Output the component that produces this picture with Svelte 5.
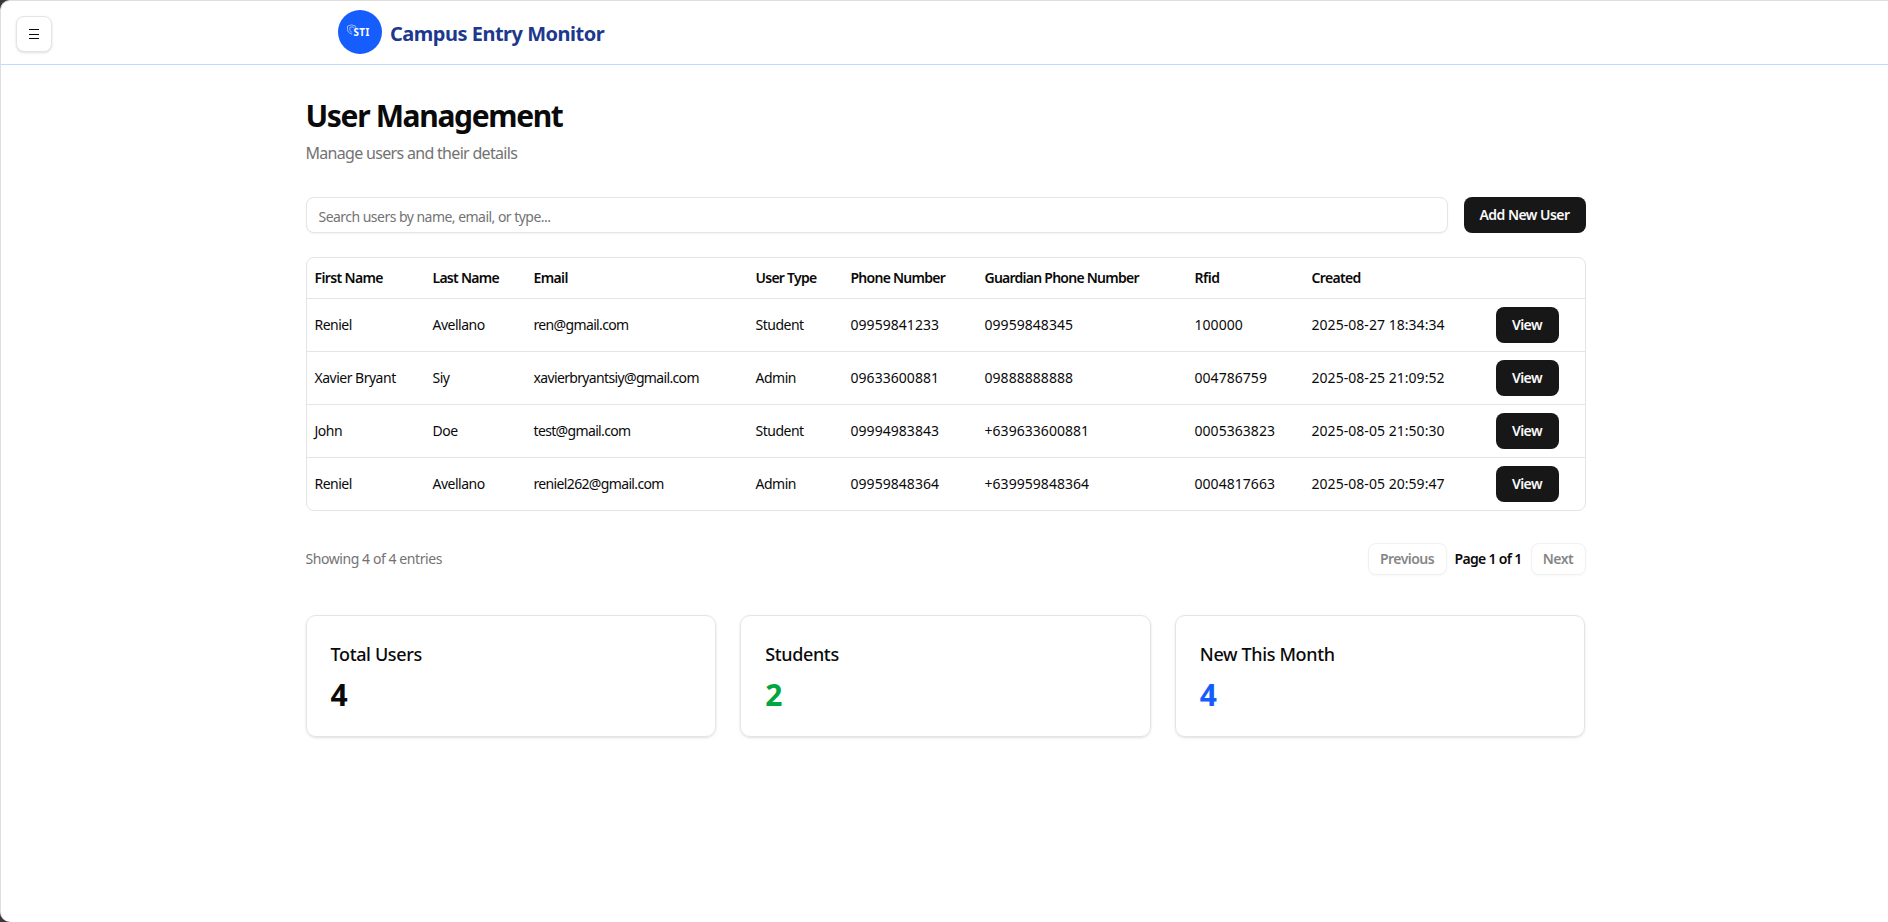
<script>
  const columns = [
    ['First Name', 118, -0.63],
    ['Last Name', 101, -0.73],
    ['Email', 222, -0.62],
    ['User Type', 95, -0.73],
    ['Phone Number', 134, -0.74],
    ['Guardian Phone Number', 210, -0.75],
    ['Rfid', 117, -0.5],
    ['Created', 184, -0.65],
    ['', 97, 0]
  ];
  const users = [
    ['Reniel', 'Avellano', 'ren@gmail.com', 'Student', '09959841233', '09959848345', '100000', '2025-08-27 18:34:34'],
    ['Xavier Bryant', 'Siy', 'xavierbryantsiy@gmail.com', 'Admin', '09633600881', '09888888888', '004786759', '2025-08-25 21:09:52'],
    ['John', 'Doe', 'test@gmail.com', 'Student', '09994983843', '+639633600881', '0005363823', '2025-08-05 21:50:30'],
    ['Reniel', 'Avellano', 'reniel262@gmail.com', 'Admin', '09959848364', '+639959848364', '0004817663', '2025-08-05 20:59:47']
  ];
  const stats = [
    { label: 'Total Users', value: 4, tone: 'plain' },
    { label: 'Students', value: 2, tone: 'green' },
    { label: 'New This Month', value: 4, tone: 'blue' }
  ];
</script>

<div class="backdrop">
  <div class="page">
    <header>
      <button class="menu" aria-label="Menu">
        <svg width="12" height="12" viewBox="0 0 12 12" shape-rendering="crispEdges"><path d="M1 1.5h10M1 6.5h10M1 10.5h10" stroke="#0a0a0a" /></svg>
      </button>
      <div class="brand">
        <svg class="logo" width="44" height="44" viewBox="0 0 44 44">
          <circle cx="22" cy="22" r="22" fill="#155dfc" />
          <path d="M9.5 16.2l4-1.4 4.2 1.4v1.6M9.5 16.2v3.2c0 2.2 1.5 3.8 4.6 4.8M11.8 17.6l2.2-.8 2.2.8M11.8 17.6v2.2c0 1.1.9 2 2.4 2.4" fill="none" stroke="#a9c4ff" stroke-width=".9" />
          <text x="15.4" y="25.6">STI</text>
        </svg>
        <span class="title">Campus Entry Monitor</span>
      </div>
    </header>

    <main>
      <h1>User Management</h1>
      <p class="sub">Manage users and their details</p>

      <div class="toolbar">
        <input placeholder="Search users by name, email, or type..." />
        <button class="dark add">Add New User</button>
      </div>

      <div class="table">
        <table>
          <colgroup>
            {#each columns as [, width]}<col style:width="{width}px" />{/each}
          </colgroup>
          <thead>
            <tr>{#each columns as [name, , spacing]}<th style:letter-spacing="{spacing}px">{name}</th>{/each}</tr>
          </thead>
          <tbody>
            {#each users as user}
              <tr>
                {#each user as value, i}<td class:num={i > 3} class:email={i === 2}>{value}</td>{/each}
                <td class="action"><button class="dark view">View</button></td>
              </tr>
            {/each}
          </tbody>
        </table>
      </div>

      <div class="pager">
        <span class="showing">Showing 4 of 4 entries</span>
        <div class="pages">
          <button class="prev" disabled>Previous</button>
          <span class="current">Page 1 of 1</span>
          <button class="next" disabled>Next</button>
        </div>
      </div>

      <section class="stats">
        {#each stats as stat}
          <article>
            <h3>{stat.label}</h3>
            <strong class={stat.tone}>{stat.value}</strong>
          </article>
        {/each}
      </section>
    </main>
  </div>
</div>

<style>
  :global(body) { margin: 0; background: #39373a; }
  * { box-sizing: border-box; }
  .backdrop { height: 922px; overflow: hidden; background: #39373a; }
  .page {
    height: 922px;
    background: #fff;
    border: solid #dededf;
    border-width: 1px 0 0 1px;
    border-radius: 10px 0 0 10px;
    color: #0a0a0a;
    font: 400 14px/20px "Noto Sans", "Open Sans", sans-serif;
    letter-spacing: -0.5px;
  }
  header {
    height: 64px;
    border-bottom: 1px solid #bedbff;
    display: flex;
    align-items: flex-start;
  }
  button { font: inherit; font-weight: 600; letter-spacing: -0.54px; padding: 0; flex: none; }
  .menu {
    width: 36px;
    height: 36px;
    margin: 15px 0 0 15px;
    display: flex;
    align-items: center;
    justify-content: center;
    background: #fff;
    border: 1px solid #e5e5e5;
    border-radius: 8px;
    box-shadow: 0 1px 3px rgba(0, 0, 0, .1), 0 1px 2px -1px rgba(0, 0, 0, .1);
  }
  .brand { display: flex; margin: 9px 0 0 286px; }
  .logo { display: block; margin-right: 8px; }
  .logo text { font: 700 9.8px "Noto Sans", sans-serif; letter-spacing: .5px; fill: #fff; }
  .title { font-size: 20px; line-height: 28px; font-weight: 700; color: #1c398e; margin-top: 10px; letter-spacing: -0.5px; }
  main { width: 1280px; padding-top: 33px; margin-left: 304.5px; }
  h1 { margin: 0; font-size: 30px; line-height: 36px; font-weight: 700; letter-spacing: -1.34px; }
  .sub { margin: 7px 0 32px; font-size: 16px; line-height: 24px; letter-spacing: -0.69px; color: #737373; }
  .toolbar { display: flex; gap: 16px; }
  input {
    flex: 1;
    height: 36px;
    min-width: 0;
    padding: 2px 12px 0;
    border: 1px solid #e5e5e5;
    border-radius: 8px;
    background: #fff;
    font: inherit;
    letter-spacing: -0.53px;
    box-shadow: 0 1px 2px rgba(0, 0, 0, .05);
  }
  input::placeholder { color: #737373; opacity: 1; }
  .dark { height: 36px; border: 0; border-radius: 8px; background: #171717; color: #fafafa; }
  .add { width: 122px; }
  .table { margin-top: 24px; border: 1px solid #e5e5e5; border-radius: 8px; overflow: hidden; }
  table { width: 1278px; table-layout: fixed; border-collapse: separate; border-spacing: 0; }
  th { height: 41px; padding: 0 8px; text-align: left; font-weight: 600; border-bottom: 1px solid #e5e5e5; white-space: nowrap; }
  td { height: 53px; padding: 0 8px; border-bottom: 1px solid #e5e5e5; white-space: nowrap; }
  tbody tr:last-child td { height: 52px; border-bottom: 0; }
  .num { letter-spacing: 0.04px; }
  .email { letter-spacing: -0.65px; }
  .view { display: block; width: 63px; }
  .pager { display: flex; justify-content: space-between; align-items: center; margin-top: 32px; height: 32px; }
  .showing { color: #737373; letter-spacing: -0.43px; }
  .pages { display: flex; align-items: center; gap: 8px; }
  .pages button {
    height: 32px;
    border: 1px solid #e5e5e5;
    border-radius: 8px;
    background: #fff;
    color: #0a0a0a;
    opacity: .5;
    box-shadow: 0 1px 2px rgba(0, 0, 0, .05);
  }
  .prev { width: 79px; }
  .next { width: 55px; }
  .current { font-weight: 600; width: 68px; letter-spacing: -0.68px; white-space: nowrap; }
  .stats { display: grid; grid-template-columns: repeat(3, 1fr); gap: 24px; margin-top: 40px; }
  article {
    height: 122px;
    padding: 24px;
    border: 1px solid #e5e5e5;
    border-radius: 10px;
    box-shadow: 0 1px 3px rgba(0, 0, 0, .1), 0 1px 2px -1px rgba(0, 0, 0, .1);
  }
  h3 { margin: 0 0 9px; font-size: 18px; line-height: 28px; font-weight: 500; letter-spacing: -0.36px; }
  strong { display: block; font-size: 30px; line-height: 36px; font-weight: 700; }
  .green { color: #00a63e; }
  .blue { color: #155dfc; }
</style>
